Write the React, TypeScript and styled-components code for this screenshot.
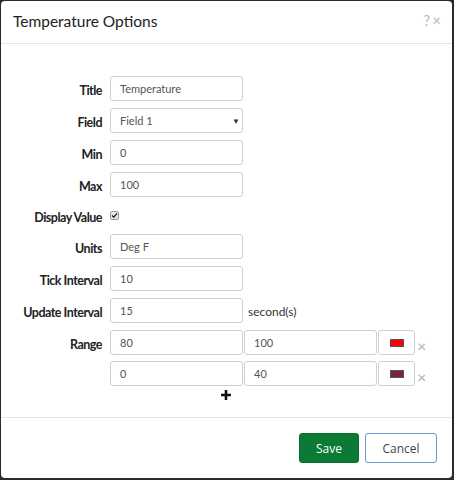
import React from 'react';
import styled, { createGlobalStyle } from 'styled-components';

const GlobalStyle = createGlobalStyle`
  html, body {
    margin: 0;
    padding: 0;
    background: #2b2b2b;
  }
  body {
    font-family: Lato, 'Open Sans', sans-serif;
    color: #333;
  }
`;

const Modal = styled.div`
  margin: 1px;
  width: 451px;
  height: 477px;
  background: #fff;
  border-radius: 4px;
  display: flex;
  flex-direction: column;
  box-sizing: border-box;
  overflow: hidden;
`;

const Header = styled.div`
  height: 42px;
  border-bottom: 1px solid #e5e5e5;
  display: flex;
  align-items: center;
  justify-content: space-between;
  padding: 0 11px 0 12px;
`;

const Heading = styled.h4`
  margin: 0;
  font-family: Lato, sans-serif;
  font-size: 15.5px;
  font-weight: 400;
  color: #222;
  padding-bottom: 2px;
`;

const HeaderTools = styled.div`
  display: flex;
  gap: 2px;
  color: #b8b8b8;
  font-size: 15px;
  align-self: flex-start;
  margin-top: 10px;
`;

const Body = styled.div`
  flex: 1;
  padding: 32px 0 0 0;
  display: flex;
  flex-direction: column;
  gap: 7px;
`;

const Row = styled.div<{ tall?: number }>`
  display: flex;
  align-items: center;
  gap: 8px;
  height: ${({ tall }) => tall ?? 25}px;
`;

const Label = styled.label`
  width: 101px;
  text-align: right;
  font-weight: 700;
  font-size: 12.5px;
  letter-spacing: -0.5px;
  color: #222;
  flex: none;
  padding-top: 4px;
`;

const Input = styled.div<{ width?: number }>`
  box-sizing: border-box;
  width: ${({ width }) => width ?? 133}px;
  height: 25px;
  border: 1px solid #cfcfcf;
  border-radius: 3px;
  padding: 0 9px;
  font-size: 11px;
  color: #555;
  display: flex;
  align-items: center;
  justify-content: space-between;
  flex: none;
`;

const Caret = styled.span`
  font-size: 8px;
  color: #333;
  margin-right: -7px;
`;

const Check = styled.span`
  box-sizing: border-box;
  width: 9px;
  height: 9px;
  border: 1px solid #9a9a9a;
  border-radius: 2px;
  background: #e9e9e9;
  display: flex;
  align-items: center;
  justify-content: center;
`;

const Suffix = styled.span`
  font-size: 12px;
  color: #333;
  margin-left: -3px;
  padding-top: 2px;
`;

const RangeStack = styled.div`
  display: flex;
  flex-direction: column;
  gap: 6px;
`;

const RangeRow = styled.div`
  display: flex;
  align-items: center;
  gap: 8px;
`;

const RangeGroup = styled.div`
  display: flex;
  gap: 1px;
`;

const ColorButton = styled.div`
  box-sizing: border-box;
  width: 37px;
  height: 25px;
  border: 1px solid #cfcfcf;
  border-radius: 3px;
  display: flex;
  align-items: center;
  justify-content: center;
`;

const Swatch = styled.span<{ color: string }>`
  box-sizing: border-box;
  width: 14px;
  height: 8px;
  background: ${({ color }) => color};
  border: 1px solid #555;
`;

const Remove = styled.span`
  font-size: 16px;
  color: #b0b0b0;
  margin-left: -6px;
  margin-top: 6px;
`;

const AddRow = styled.div`
  display: flex;
  padding-left: 220px;
  margin-top: -3px;
`;

const Footer = styled.div`
  border-top: 1px solid #e5e5e5;
  padding: 15px 15px 15px;
  display: flex;
  justify-content: flex-end;
  gap: 6px;
`;

const Button = styled.button<{ primary?: boolean }>`
  box-sizing: border-box;
  height: 30px;
  width: ${({ primary }) => (primary ? 60 : 72)}px;
  border-radius: 3px;
  font-family: 'Open Sans', sans-serif;
  font-size: 12px;
  border: 1px solid ${({ primary }) => (primary ? '#0a6e2e' : '#6a9bd0')};
  background: ${({ primary }) => (primary ? '#0b7a35' : '#fff')};
  color: ${({ primary }) => (primary ? '#fff' : '#444')};
`;

const ranges = [
  { min: '80', max: '100', color: '#ff0000' },
  { min: '0', max: '40', color: '#7b2340' },
];

export default function App() {
  return (
    <>
      <GlobalStyle />
      <Modal>
        <Header>
          <Heading>Temperature Options</Heading>
          <HeaderTools>
            <span>?</span>
            <span>×</span>
          </HeaderTools>
        </Header>
        <Body>
          <Row>
            <Label>Title</Label>
            <Input>Temperature</Input>
          </Row>
          <Row>
            <Label>Field</Label>
            <Input>
              Field 1<Caret>▼</Caret>
            </Input>
          </Row>
          <Row>
            <Label>Min</Label>
            <Input>0</Input>
          </Row>
          <Row>
            <Label>Max</Label>
            <Input>100</Input>
          </Row>
          <Row tall={23}>
            <Label>Display Value</Label>
            <Check>
              <svg width="7" height="7" viewBox="0 0 7 7">
                <path d="M1 3.6 L2.8 5.3 L6 1.4" fill="none" stroke="#222" strokeWidth="1.4" />
              </svg>
            </Check>
          </Row>
          <Row>
            <Label>Units</Label>
            <Input>Deg F</Input>
          </Row>
          <Row>
            <Label>Tick Interval</Label>
            <Input>10</Input>
          </Row>
          <Row>
            <Label>Update Interval</Label>
            <Input>15</Input>
            <Suffix>second(s)</Suffix>
          </Row>
          <RangeStack>
            {ranges.map((r, i) => (
              <RangeRow key={i}>
                <Label>{i === 0 ? 'Range' : ''}</Label>
                <RangeGroup>
                  <Input>{r.min}</Input>
                  <Input>{r.max}</Input>
                  <ColorButton>
                    <Swatch color={r.color} />
                  </ColorButton>
                </RangeGroup>
                <Remove>×</Remove>
              </RangeRow>
            ))}
          </RangeStack>
          <AddRow>
            <svg width="10" height="10" viewBox="0 0 10 10">
              <path d="M5 0 V10 M0 5 H10" stroke="#111" strokeWidth="2.6" />
            </svg>
          </AddRow>
        </Body>
        <Footer>
          <Button primary>Save</Button>
          <Button>Cancel</Button>
        </Footer>
      </Modal>
    </>
  );
}
